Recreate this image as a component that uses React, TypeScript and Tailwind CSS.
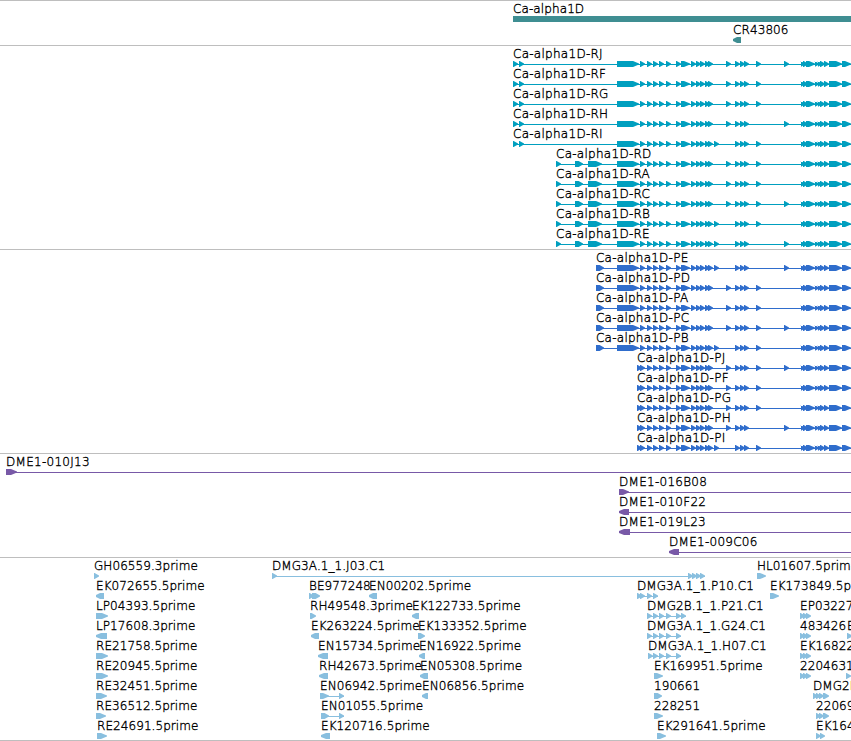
type Mark = [x: number, w: number, dir?: "left"];

type Feature = {
  label: string;
  x: number;
  marks: Mark[];
  end?: number; // where the connecting line stops
  solid?: boolean;
};

const EDGE = 851;

// Exons shared by every Ca-alpha1D isoform
const FIVE_PRIME: Mark[] = [[640, 5], [647, 5], [653, 5], [659, 5], [666, 5], [676, 5], [681, 9], [691, 5], [696, 5], [700, 5], [705, 5], [708, 5]];
const MIDDLE: Mark[] = [[735, 5], [740, 5], [744, 5]];
const THREE_PRIME: Mark[] = [[801, 4], [803, 5], [806, 9], [815, 4], [818, 4], [820, 5], [824, 5], [829, 13], [842, 9]];

// Leading exons of each isoform group
const LONG: Mark[] = [[513, 5], [519, 5], [617, 22]];
const SHORT: Mark[] = [[556, 5], [575, 8], [588, 14], [617, 22]];
const PROT_LONG: Mark[] = [[596, 8], [617, 22]];
const PROT_SHORT: Mark[] = [[637, 5]];

function isoform(name: string, lead: Mark[], optional: number[]): Feature[] {
  const extra = optional.map((x): Mark => [x, 5]);
  return [{ label: `Ca-alpha1D-${name}`, x: lead[0][0], marks: [...lead, ...FIVE_PRIME, ...MIDDLE, ...extra, ...THREE_PRIME], end: EDGE }];
}

function est(label: string, x: number, w: number, dir?: "left"): Feature {
  return { label, x, marks: [dir ? [x, w, dir] : [x, w]] };
}

const genes: Feature[][] = [
  [{ label: "Ca-alpha1D", x: 513, marks: [], end: EDGE, solid: true }],
  [est("CR43806", 733, 8, "left")],
];

const transcripts: Feature[][] = [
  isoform("RJ", LONG, [726, 756, 784]),
  isoform("RF", LONG, [726, 756]),
  isoform("RG", LONG, [726, 756]),
  isoform("RH", LONG, [726, 784]),
  isoform("RI", LONG, [714, 756]),
  isoform("RD", SHORT, [726, 756]),
  isoform("RA", SHORT, [726, 756]),
  isoform("RC", SHORT, [726, 756, 784]),
  isoform("RB", SHORT, [714, 756]),
  isoform("RE", SHORT, [714, 784]),
];

const proteins: Feature[][] = [
  isoform("PE", PROT_LONG, [714, 784]),
  isoform("PD", PROT_LONG, [726, 756]),
  isoform("PA", PROT_LONG, [726, 756]),
  isoform("PC", PROT_LONG, [726, 756, 784]),
  isoform("PB", PROT_LONG, [714, 756]),
  isoform("PJ", PROT_SHORT, [726, 756, 784]),
  isoform("PF", PROT_SHORT, [726, 756]),
  isoform("PG", PROT_SHORT, [726, 756]),
  isoform("PH", PROT_SHORT, [726, 784]),
  isoform("PI", PROT_SHORT, [714, 756]),
];

const clones: Feature[][] = [
  [{ label: "DME1-010J13", x: 6, marks: [[6, 11]], end: EDGE }],
  [{ label: "DME1-016B08", x: 619, marks: [[619, 10]], end: EDGE }],
  [{ label: "DME1-010F22", x: 619, marks: [[619, 10, "left"]], end: EDGE }],
  [{ label: "DME1-019L23", x: 619, marks: [[619, 11, "left"]], end: EDGE }],
  [{ label: "DME1-009C06", x: 669, marks: [[669, 10, "left"]], end: EDGE }],
];

const ests: Feature[][] = [
  [
    est("GH06559.3prime", 94, 5),
    { label: "DMG3A.1_1.J03.C1", x: 272, marks: [[272, 5], [688, 5], [692, 5], [696, 5], [700, 5]], end: 705 },
    est("HL01607.5prime", 757, 9),
  ],
  [
    est("EK072655.5prime", 96, 8, "left"),
    { label: "BE977248", x: 309, marks: [[309, 5], [312, 8]] },
    est("EN00202.5prime", 369, 8, "left"),
    { label: "DMG3A.1_1.P10.C1", x: 637, marks: [[637, 5], [640, 5], [647, 5], [653, 5]], end: 658 },
    est("EK173849.5prime", 770, 9),
  ],
  [
    est("LP04393.5prime", 96, 12),
    est("RH49548.3prime", 310, 6),
    est("EK122733.5prime", 412, 7, "left"),
    { label: "DMG2B.1_1.P21.C1", x: 647, marks: [[647, 5], [653, 5], [659, 5], [666, 5], [676, 5], [681, 5]], end: 686 },
    { label: "EP03227", x: 800, marks: [[800, 5], [803, 5], [806, 5]] },
  ],
  [
    est("LP17608.3prime", 96, 11, "left"),
    est("EK263224.5prime", 311, 8, "left"),
    est("EK133352.5prime", 418, 7),
    { label: "DMG3A.1_1.G24.C1", x: 647, marks: [[647, 5], [653, 5], [659, 5], [666, 5], [676, 5]], end: 681 },
    { label: "483426", x: 800, marks: [[800, 5], [803, 5], [806, 5]] },
    est("E", 847, 5),
  ],
  [
    est("RE21758.5prime", 96, 12),
    est("EN15734.5prime", 318, 10, "left"),
    est("EN16922.5prime", 419, 6, "left"),
    { label: "DMG3A.1_1.H07.C1", x: 648, marks: [[648, 5], [653, 5], [659, 5], [666, 5], [676, 5]], end: 681 },
    { label: "EK16822", x: 800, marks: [[800, 5], [803, 5], [806, 5]] },
  ],
  [
    est("RE20945.5prime", 96, 12),
    est("RH42673.5prime", 319, 9, "left"),
    est("EN05308.5prime", 420, 8, "left"),
    est("EK169951.5prime", 654, 9),
    { label: "220463", x: 800, marks: [[800, 5], [803, 5], [806, 5]] },
    est("1", 846, 5),
  ],
  [
    est("RE32451.5prime", 96, 11),
    { label: "EN06942.5prime", x: 320, marks: [[320, 9], [339, 5]], end: 344 },
    est("EN06856.5prime", 422, 6, "left"),
    est("190661", 654, 8),
    { label: "DMG2B", x: 813, marks: [[813, 5], [816, 5], [819, 5], [823, 6]] },
  ],
  [
    est("RE36512.5prime", 96, 10),
    { label: "EN01055.5prime", x: 321, marks: [[321, 8], [339, 5]], end: 344 },
    est("228251", 654, 9),
    { label: "22069", x: 816, marks: [[816, 5], [819, 5], [823, 6]] },
  ],
  [
    est("RE24691.5prime", 97, 10),
    est("EK120716.5prime", 321, 9, "left"),
    est("EK291641.5prime", 657, 9),
    { label: "EK164", x: 816, marks: [[816, 5], [820, 5]] },
  ],
];

// Block with a tapered head, 6px tall
function points(x: number, w: number, dir?: "left") {
  const head = w > 8 ? 5 : 4;
  if (dir === "left") {
    return `${x + w},0 ${x + head},0 ${x},2 ${x},4 ${x + head},6 ${x + w},6`;
  }
  if (w > 8) {
    return `${x},0 ${x + w - 6},0 ${x + w},2.4 ${x + w},3.6 ${x + w - 6},6 ${x},6`;
  }
  return `${x},0 ${x + w - 4.4},0 ${x + w},2.4 ${x + w},3.6 ${x + w - 4.4},6 ${x},6`;
}

function Glyph({ feature }: { feature: Feature }) {
  const { x, marks, end, solid } = feature;
  const last = marks[marks.length - 1];
  const width = (end ?? last[0] + last[1]) - x;
  return (
    <svg width={width} height="6" viewBox={`${x} 0 ${width} 6`} fill="currentColor" className="block">
      {end && <rect x={x} y={solid ? 0 : 3} width={width} height={solid ? 6 : 1} />}
      {marks.map(([mx, w, dir]) => (
        <polygon key={mx} points={points(mx, w, dir)} />
      ))}
    </svg>
  );
}

function Row({ features }: { features: Feature[] }) {
  return (
    <div className="relative h-5">
      {features.map((f) => (
        <div key={f.label} className="absolute top-0 flex flex-col items-start" style={{ left: f.x }}>
          <span className="mt-px h-3.5 text-[12px] leading-[14px] whitespace-nowrap text-black [-webkit-text-stroke:0.35px_#000]">{f.label}</span>
          <Glyph feature={f} />
        </div>
      ))}
    </div>
  );
}

function Track({ rows, className }: { rows: Feature[][]; className: string }) {
  return (
    <section className={`flex flex-col border-t border-[#bebebe] ${className}`}>
      {rows.map((row, i) => (
        <Row key={i} features={row} />
      ))}
    </section>
  );
}

export default function App() {
  return (
    <main className="flex h-[741px] w-[851px] flex-col overflow-hidden border-b border-[#bebebe] bg-white font-['DejaVu_Sans',sans-serif] font-extralight">
      <Track rows={genes} className="h-[45px] gap-px tracking-[0.1px] text-[#3f8e92]" />
      <Track rows={transcripts} className="h-[204px] tracking-[0.27px] text-[#009fbf]" />
      <Track rows={proteins} className="h-[204px] tracking-[0.24px] text-[#2f6dcc]" />
      <Track rows={clones} className="h-[104px] tracking-[0.27px] text-[#7859a7]" />
      <Track rows={ests} className="h-[183px] tracking-[0.07px] text-[#89bfdf]" />
    </main>
  );
}
